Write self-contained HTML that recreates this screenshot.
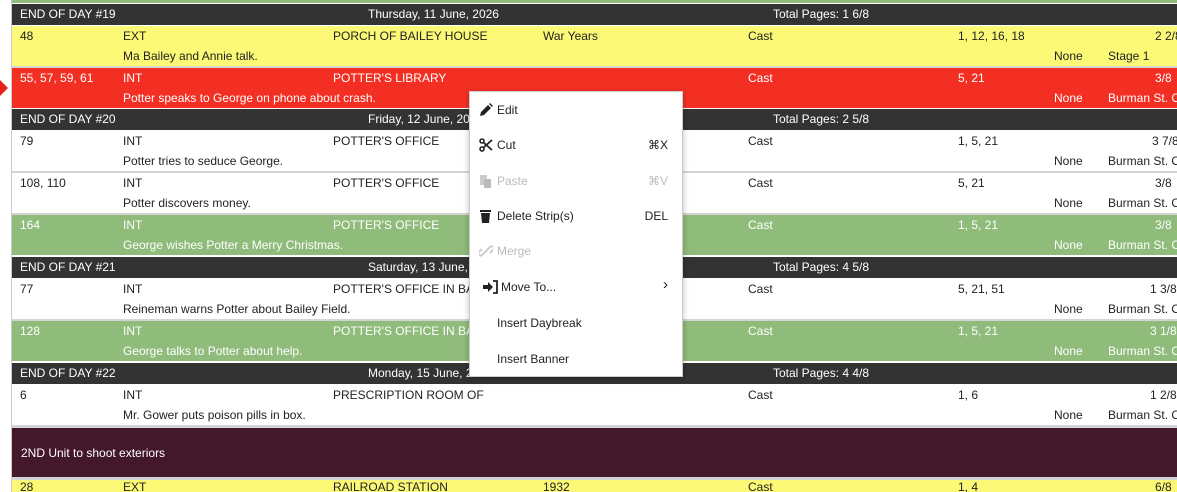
<!DOCTYPE html>
<html><head><style>
body{margin:0;width:1177px;height:492px;overflow:hidden;background:#fff;font-family:"Liberation Sans",Arial,sans-serif;font-size:12px;position:relative}
.r{position:absolute;left:12px;width:1165px;overflow:hidden;white-space:nowrap}
.r span{position:absolute;line-height:14px}
.d{background:#333;color:#fff;height:21px}
.y{background:#fcf976;color:#222}
.rd{background:#f32f23;color:#fff}
.w{background:#fff;color:#222}
.g{background:#8fbb7b;color:#fff}
.s{height:40px}
.s span.a{top:3px}
.s span.b{top:23px}
.sep{position:absolute;left:12px;width:1165px;background:#d4d4d4}
.menu{position:absolute;left:469px;top:91px;width:212px;height:284px;background:#fff;border:1px solid #ccc;box-shadow:0 2px 6px rgba(0,0,0,.25);color:#222}
.menu div{position:absolute;left:0;width:212px;line-height:14px}
.menu .t{position:absolute;left:27px}
.menu .k{position:absolute;right:14px}
.menu .dis{color:#bbb}
.menu svg{position:absolute;left:9px;top:0}
</style></head><body>
<div style="position:absolute;left:11px;top:0;width:1px;height:492px;background:#ccc"></div>
<div class="r" style="top:0;height:3px;background:#8fbb7b"></div>
<svg style="position:absolute;left:0;top:80px" width="9" height="16"><polygon points="0,0 8,8 0,16" fill="#e8221a"/></svg>

<div class="r d" style="top:4px"><span style="left:8px;top:3px">END OF DAY #19</span><span style="left:356px;top:3px">Thursday, 11 June, 2026</span><span style="left:761px;top:3px">Total Pages: 1 6/8</span></div>
<div class="r y s" style="top:26px"><span class="a" style="left:8px">48</span><span class="a" style="left:111px">EXT</span><span class="a" style="left:321px">PORCH OF BAILEY HOUSE</span><span class="a" style="left:531px">War Years</span><span class="a" style="left:736px">Cast</span><span class="a" style="left:946px">1, 12, 16, 18</span><span class="a" style="left:1143px">2 2/8</span><span class="b" style="left:111px">Ma Bailey and Annie talk.</span><span class="b" style="left:1042px">None</span><span class="b" style="left:1096px">Stage 1</span></div>
<div class="sep" style="top:66px;height:2px"></div>
<div class="r rd s" style="top:68px"><span class="a" style="left:8px">55, 57, 59, 61</span><span class="a" style="left:111px">INT</span><span class="a" style="left:321px">POTTER'S LIBRARY</span><span class="a" style="left:736px">Cast</span><span class="a" style="left:946px">5, 21</span><span class="a" style="left:1143px">3/8</span><span class="b" style="left:111px">Potter speaks to George on phone about crash.</span><span class="b" style="left:1042px">None</span><span class="b" style="left:1096px">Burman St. O</span></div>
<div class="r d" style="top:109px"><span style="left:8px;top:3px">END OF DAY #20</span><span style="left:356px;top:3px">Friday, 12 June, 2026</span><span style="left:761px;top:3px">Total Pages: 2 5/8</span></div>
<div class="r w s" style="top:131px"><span class="a" style="left:8px">79</span><span class="a" style="left:111px">INT</span><span class="a" style="left:321px">POTTER'S OFFICE</span><span class="a" style="left:736px">Cast</span><span class="a" style="left:946px">1, 5, 21</span><span class="a" style="left:1140px">3 7/8</span><span class="b" style="left:111px">Potter tries to seduce George.</span><span class="b" style="left:1042px">None</span><span class="b" style="left:1096px">Burman St. O</span></div>
<div class="sep" style="top:171px;height:2px"></div>
<div class="r w s" style="top:173px"><span class="a" style="left:8px">108, 110</span><span class="a" style="left:111px">INT</span><span class="a" style="left:321px">POTTER'S OFFICE</span><span class="a" style="left:736px">Cast</span><span class="a" style="left:946px">5, 21</span><span class="a" style="left:1143px">3/8</span><span class="b" style="left:111px">Potter discovers money.</span><span class="b" style="left:1042px">None</span><span class="b" style="left:1096px">Burman St. O</span></div>
<div class="sep" style="top:213px;height:2px"></div>
<div class="r g s" style="top:215px"><span class="a" style="left:8px">164</span><span class="a" style="left:111px">INT</span><span class="a" style="left:321px">POTTER'S OFFICE</span><span class="a" style="left:736px">Cast</span><span class="a" style="left:946px">1, 5, 21</span><span class="a" style="left:1143px">3/8</span><span class="b" style="left:111px">George wishes Potter a Merry Christmas.</span><span class="b" style="left:1042px">None</span><span class="b" style="left:1096px">Burman St. O</span></div>
<div class="r d" style="top:257px"><span style="left:8px;top:3px">END OF DAY #21</span><span style="left:356px;top:3px">Saturday, 13 June, 2026</span><span style="left:761px;top:3px">Total Pages: 4 5/8</span></div>
<div class="r w s" style="top:279px"><span class="a" style="left:8px">77</span><span class="a" style="left:111px">INT</span><span class="a" style="left:321px">POTTER'S OFFICE IN BANK</span><span class="a" style="left:736px">Cast</span><span class="a" style="left:946px">5, 21, 51</span><span class="a" style="left:1138px">1 3/8</span><span class="b" style="left:111px">Reineman warns Potter about Bailey Field.</span><span class="b" style="left:1042px">None</span><span class="b" style="left:1096px">Burman St. O</span></div>
<div class="sep" style="top:319px;height:2px"></div>
<div class="r g s" style="top:321px"><span class="a" style="left:8px">128</span><span class="a" style="left:111px">INT</span><span class="a" style="left:321px">POTTER'S OFFICE IN BANK</span><span class="a" style="left:736px">Cast</span><span class="a" style="left:946px">1, 5, 21</span><span class="a" style="left:1138px">3 1/8</span><span class="b" style="left:111px">George talks to Potter about help.</span><span class="b" style="left:1042px">None</span><span class="b" style="left:1096px">Burman St. O</span></div>
<div class="r d" style="top:363px"><span style="left:8px;top:3px">END OF DAY #22</span><span style="left:356px;top:3px">Monday, 15 June, 2026</span><span style="left:761px;top:3px">Total Pages: 4 4/8</span></div>
<div class="r w s" style="top:385px"><span class="a" style="left:8px">6</span><span class="a" style="left:111px">INT</span><span class="a" style="left:321px">PRESCRIPTION ROOM OF</span><span class="a" style="left:736px">Cast</span><span class="a" style="left:946px">1, 6</span><span class="a" style="left:1138px">1 2/8</span><span class="b" style="left:111px">Mr. Gower puts poison pills in box.</span><span class="b" style="left:1042px">None</span><span class="b" style="left:1096px">Burman St. O</span></div>
<div class="sep" style="top:425px;height:3px"></div>
<div class="r" style="top:428px;height:50px;background:#43182a;color:#fff"><span style="left:9px;top:18px">2ND Unit to shoot exteriors</span></div>
<div class="sep" style="top:477px;height:3px"></div>
<div class="r y" style="top:480px;height:12px"><span style="left:8px;top:0">28</span><span style="left:111px;top:0">EXT</span><span style="left:321px;top:0">RAILROAD STATION</span><span style="left:531px;top:0">1932</span><span style="left:736px;top:0">Cast</span><span style="left:946px;top:0">1, 4</span><span style="left:1143px;top:0">6/8</span></div>

<div class="menu">
<div style="top:11px"><svg width="14" height="14" viewBox="0 0 14 14"><path d="M1 13l1-4 7-7 3 3-7 7z M10 1l1-1 3 3-1 1z" fill="#222"/></svg><span class="t">Edit</span></div>
<div style="top:46px"><svg width="14" height="14" viewBox="0 0 14 14"><circle cx="3" cy="3" r="2" fill="none" stroke="#222" stroke-width="1.6"/><circle cx="3" cy="11" r="2" fill="none" stroke="#222" stroke-width="1.6"/><path d="M4.5 4.5L13 12M4.5 9.5L13 2" stroke="#222" stroke-width="1.8"/></svg><span class="t">Cut</span><span class="k">⌘X</span></div>
<div class="dis" style="top:82px"><svg width="14" height="14" viewBox="0 0 14 14"><rect x="1" y="1" width="7" height="10" fill="#ccc"/><rect x="5" y="5" width="7" height="9" fill="#bbb"/></svg><span class="t">Paste</span><span class="k">⌘V</span></div>
<div style="top:117px"><svg width="14" height="14" viewBox="0 0 14 14"><rect x="1" y="1" width="11" height="2" fill="#222"/><path d="M2 4h9l-1 10H3z" fill="#222"/></svg><span class="t">Delete Strip(s)</span><span class="k">DEL</span></div>
<div class="dis" style="top:152px"><svg width="14" height="14" viewBox="0 0 14 14"><path d="M6 8l-3 3a2 2 0 0 1-3-3l3-3M8 6l3-3a2 2 0 0 1 3 3l-3 3M5 9l4-4" stroke="#ccc" stroke-width="2" fill="none"/></svg><span class="t">Merge</span></div>
<div style="top:188px"><svg style="left:13px" width="16" height="14" viewBox="0 0 16 14"><path d="M0 5h5V2l5 5-5 5V9H0z" fill="#222"/><path d="M10 1h4v12h-4" stroke="#222" stroke-width="1.8" fill="none"/></svg><span class="t" style="left:31px">Move To...</span><span class="k" style="font-size:15px;top:-2px">›</span></div>
<div style="top:224px"><span class="t">Insert Daybreak</span></div>
<div style="top:260px"><span class="t">Insert Banner</span></div>
</div>
</body></html>
